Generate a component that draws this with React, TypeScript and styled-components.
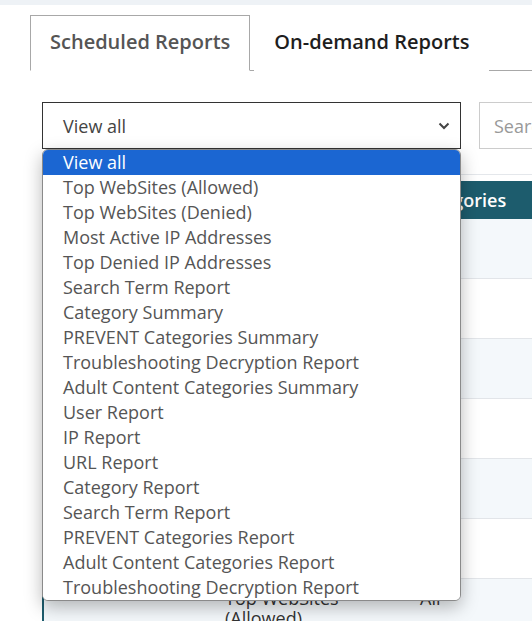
import React from 'react'
import styled, { createGlobalStyle } from 'styled-components'

const GlobalStyle = createGlobalStyle`
  body {
    margin: 0;
    background: #fff;
    font-family: 'Open Sans', 'Noto Sans', sans-serif;
    overflow: hidden;
  }
`

const TopStrip = styled.div`
  height: 5px;
  background: #eef2f6;
`

const Page = styled.div`
  padding: 10px 0 0 30px;
`

const TabList = styled.ul`
  display: flex;
  list-style: none;
  margin: 0;
  padding: 0;
  border-bottom: 1px solid #a8a8a8;
`

const Tab = styled.li<{ active?: boolean }>`
  display: flex;
  align-items: center;
  box-sizing: border-box;
  height: 56px;
  padding: 0 19px 3px;
  margin-bottom: -1px;
  margin-right: ${p => (p.active ? '4px' : '0')};
  font-size: 20px;
  font-weight: 600;
  color: ${p => (p.active ? '#555' : '#1e1e1e')};
  border: 1px solid ${p => (p.active ? '#a8a8a8' : 'transparent')};
  border-bottom-color: ${p => (p.active ? '#fff' : 'transparent')};
  background: #fff;
`

const FilterRow = styled.div`
  position: relative;
  display: flex;
  gap: 18px;
  margin: 31px 0 0 12px;
`

const SelectBox = styled.div`
  position: relative;
  display: flex;
  align-items: center;
  justify-content: space-between;
  box-sizing: border-box;
  width: 419px;
  height: 47px;
  padding: 0 10px 0 20px;
  border: 1px solid #333;
  font-size: 18px;
  color: #444;
`

const SearchBox = styled.div`
  display: flex;
  align-items: center;
  box-sizing: border-box;
  flex: 1;
  height: 47px;
  padding: 0 14px;
  border: 1px solid #ccc;
  border-right: none;
  font-size: 18px;
  color: #999;
  white-space: nowrap;
  overflow: hidden;
`

const OptionList = styled.ul`
  position: absolute;
  z-index: 10;
  top: 47px;
  left: 0;
  width: 419px;
  box-sizing: border-box;
  margin: 0;
  padding: 0;
  list-style: none;
  background: #fff;
  border: 1px solid #8a8a8a;
  border-radius: 6px;
  overflow: hidden;
  box-shadow: 0 6px 18px rgba(0, 0, 0, 0.28);
`

const Option = styled.li<{ selected?: boolean }>`
  height: 25px;
  line-height: 25px;
  padding-left: 20px;
  font-size: 18px;
  white-space: nowrap;
  color: ${p => (p.selected ? '#fff' : '#555')};
  background: ${p => (p.selected ? '#1b66d2' : '#fff')};
`

const TableArea = styled.div`
  margin: 25px 0 0 12px;
  border-top: 1px solid #e4e7eb;
  padding-top: 6px;
`

const Table = styled.div`
  border-left: 2px solid #1d5c6d;
`

const HeaderRow = styled.div`
  display: grid;
  grid-template-columns: 161px 195px 1fr;
  align-items: center;
  height: 38px;
  background: #1d5c6d;
  color: #fff;
  font-size: 18px;
  font-weight: 600;
`

const Row = styled.div<{ striped?: boolean }>`
  display: grid;
  grid-template-columns: 161px 195px 1fr;
  align-items: start;
  box-sizing: border-box;
  height: 60px;
  padding-top: 9px;
  background: ${p => (p.striped ? '#f4f8fb' : '#fff')};
  border-bottom: 1px solid #e2e5e9;
  font-size: 18px;
  line-height: 20px;
  color: #333;
`

const Cell = styled.div`
  padding: 0 20px;
  white-space: normal;
`

const HeadCell = styled.div`
  padding: 0 14px;
  white-space: nowrap;
`

const Chevron = () => (
  <svg width="12" height="8" viewBox="0 0 12 8">
    <path d="M1.5 1.5 L6 6 L10.5 1.5" fill="none" stroke="#444" strokeWidth="2" />
  </svg>
)

const options = [
  'View all',
  'Top WebSites (Allowed)',
  'Top WebSites (Denied)',
  'Most Active IP Addresses',
  'Top Denied IP Addresses',
  'Search Term Report',
  'Category Summary',
  'PREVENT Categories Summary',
  'Troubleshooting Decryption Report',
  'Adult Content Categories Summary',
  'User Report',
  'IP Report',
  'URL Report',
  'Category Report',
  'Search Term Report',
  'PREVENT Categories Report',
  'Adult Content Categories Report',
  'Troubleshooting Decryption Report',
]

const rows = [
  ['', 'Category Summary', 'All'],
  ['', 'User Report', 'All'],
  ['', 'IP Report', 'All'],
  ['', 'URL Report', 'All'],
  ['', 'Search Term Report', 'All'],
  ['', 'Category Report', 'All'],
  ['', 'Top WebSites (Allowed)', 'All'],
  ['', 'Top WebSites (Denied)', 'All'],
]

export default function App() {
  return (
    <>
      <GlobalStyle />
      <TopStrip />
      <Page>
        <TabList>
          <Tab active>Scheduled Reports</Tab>
          <Tab>On-demand Reports</Tab>
        </TabList>
        <FilterRow>
          <SelectBox>
            View all
            <Chevron />
          </SelectBox>
          <SearchBox>Search</SearchBox>
          <OptionList>
            {options.map((o, i) => (
              <Option key={i} selected={i === 0}>
                {o}
              </Option>
            ))}
          </OptionList>
        </FilterRow>
        <TableArea>
          <Table>
            <HeaderRow>
              <HeadCell>Schedule</HeadCell>
              <HeadCell>Report</HeadCell>
              <HeadCell>Categories</HeadCell>
            </HeaderRow>
            {rows.map((r, i) => (
              <Row key={i} striped={i % 2 === 0}>
                <Cell>{r[0]}</Cell>
                <Cell>{r[1]}</Cell>
                <Cell>{r[2]}</Cell>
              </Row>
            ))}
          </Table>
        </TableArea>
      </Page>
    </>
  )
}
